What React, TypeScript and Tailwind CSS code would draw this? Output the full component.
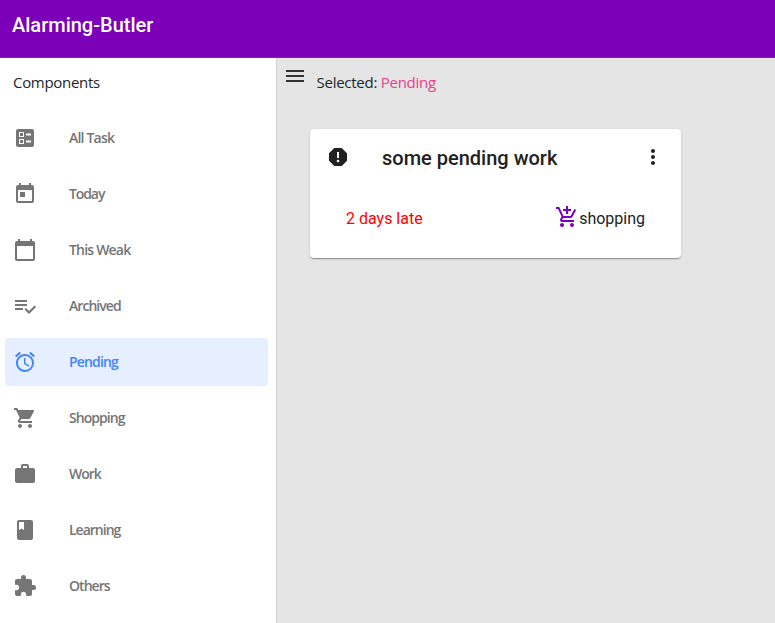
import type { ComponentType } from 'react';
import {
  MdAddShoppingCart,
  MdAlarm,
  MdBallot,
  MdBook,
  MdExtension,
  MdMenu,
  MdMoreVert,
  MdReport,
  MdShoppingCart,
  MdToday,
  MdWork,
} from 'react-icons/md';

type IconProps = { className?: string };

function CalendarIcon({ className }: IconProps) {
  return (
    <svg viewBox="0 0 24 24" fill="currentColor" className={className}>
      <path d="M20 3h-1V1h-2v2H7V1H5v2H4c-1.1 0-2 .9-2 2v16c0 1.1.9 2 2 2h16c1.1 0 2-.9 2-2V5c0-1.1-.9-2-2-2zm0 18H4V8h16v13z" />
    </svg>
  );
}

function ListCheckIcon({ className }: IconProps) {
  return (
    <svg viewBox="0 0 24 24" fill="currentColor" className={className}>
      <path d="M14 10H2v2h12v-2zm0-4H2v2h12V6zM2 16h8v-2H2v2zm19.5-4.5L23 13l-6.99 7-4.51-4.5L13 14l3.01 3 5.49-5.5z" />
    </svg>
  );
}

type Item = { label: string; Icon: ComponentType<IconProps>; tracking: string };

const items: Item[] = [
  { label: 'All Task', Icon: MdBallot, tracking: 'tracking-[-0.8px]' },
  { label: 'Today', Icon: MdToday, tracking: 'tracking-[-1.1px]' },
  { label: 'This Weak', Icon: CalendarIcon, tracking: 'tracking-[-0.8px]' },
  { label: 'Archived', Icon: ListCheckIcon, tracking: 'tracking-[-0.95px]' },
  { label: 'Pending', Icon: MdAlarm, tracking: 'tracking-[-0.85px]' },
  { label: 'Shopping', Icon: MdShoppingCart, tracking: 'tracking-[-0.95px]' },
  { label: 'Work', Icon: MdWork, tracking: 'tracking-[-1px]' },
  { label: 'Learning', Icon: MdBook, tracking: 'tracking-[-1px]' },
  { label: 'Others', Icon: MdExtension, tracking: 'tracking-[-0.95px]' },
];

function Sidebar() {
  return (
    <aside className="w-[277px] shrink-0 border-r border-[#d4d4d4] bg-white font-['Open_Sans',sans-serif]">
      <h2 className="pt-3 pl-[13px] text-[15px] leading-6 tracking-[-0.3px] text-[#212529]">Components</h2>
      <nav className="mt-5 flex flex-col gap-2 pr-2 pl-[5px]">
        {items.map(({ label, Icon, tracking }) => (
          <a
            key={label}
            className={`flex h-12 items-center rounded px-2 ${
              label === 'Pending' ? 'bg-[#e6efff] text-[#4383fd]' : 'text-[#757575]'
            }`}
          >
            <Icon className="size-6" />
            <span className={`ml-8 text-[14px] leading-5 font-semibold ${tracking}`}>{label}</span>
          </a>
        ))}
      </nav>
    </aside>
  );
}

function TaskCard() {
  return (
    <article className="mt-[31px] ml-[33px] h-[129px] w-[371px] rounded bg-white font-[Roboto,sans-serif] text-[#212121] shadow-[0_2px_1px_-1px_rgba(0,0,0,0.2),0_1px_1px_0_rgba(0,0,0,0.14),0_1px_3px_0_rgba(0,0,0,0.12)]">
      <header className="flex items-start pt-4 pr-4 pl-4">
        <MdReport className="size-6" />
        <h3 className="mt-px ml-8 text-[20px] leading-6 font-medium">some pending work</h3>
        <MdMoreVert className="ml-auto size-6" />
      </header>
      <div className="mt-[37px] flex items-center justify-between pr-9 pl-9 text-[16px] leading-6">
        <span className="text-[#ff0000]">2 days late</span>
        <span className="flex items-center">
          <MdAddShoppingCart className="-mt-1 size-6 text-[#7b00b8]" />
          shopping
        </span>
      </div>
    </article>
  );
}

export default function App() {
  return (
    <div className="flex h-[623px] w-[775px] flex-col overflow-hidden bg-[#e5e5e5]">
      <header className="h-[58px] shrink-0 border-b border-[#f00028] bg-[#7b00b8] pt-[13px] pl-3 font-[Roboto,sans-serif] text-[20px] leading-6 font-medium text-white">
        Alarming-Butler
      </header>
      <div className="flex min-h-0 flex-1">
        <Sidebar />
        <main className="flex-1">
          <div className="flex h-10 items-start pl-1.5">
            <MdMenu className="mt-1.5 size-6 text-[#333333]" />
            <p className="mt-3 ml-[9.5px] font-['Open_Sans',sans-serif] text-[15px] leading-6 tracking-[-0.26px] text-[#212529]">
              Selected: <span className="text-[#e83e8c]">Pending</span>
            </p>
          </div>
          <TaskCard />
        </main>
      </div>
    </div>
  );
}
